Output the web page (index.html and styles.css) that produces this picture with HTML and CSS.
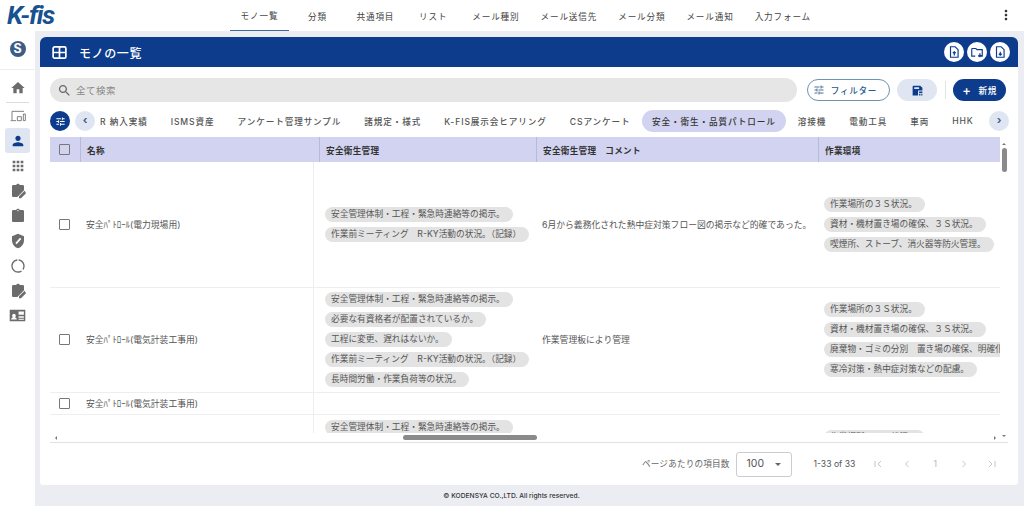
FILE: index.html
```html
<!DOCTYPE html>
<html lang="ja">
<head>
    <meta charset="UTF-8">
    <meta name="viewport" content="width=device-width, initial-scale=1.0">
    <title>モノの一覧</title>
    <link rel="stylesheet" href="styles.css">
</head>
<body>
    <header class="topbar">
        <div class="logo">K-fis</div>
        <nav class="nav">
            <a class="nav-item active">モノ一覧</a>
            <a class="nav-item">分類</a>
            <a class="nav-item">共通項目</a>
            <a class="nav-item">リスト</a>
            <a class="nav-item">メール種別</a>
            <a class="nav-item">メール送信先</a>
            <a class="nav-item">メール分類</a>
            <a class="nav-item">メール通知</a>
            <a class="nav-item">入力フォーム</a>
        </nav>
        <svg class="more" viewBox="0 0 24 24"><path d="M12 8c1.1 0 2-.9 2-2s-.9-2-2-2-2 .9-2 2 .9 2 2 2zm0 2c-1.1 0-2 .9-2 2s.9 2 2 2 2-.9 2-2-.9-2-2-2zm0 6c-1.1 0-2 .9-2 2s.9 2 2 2 2-.9 2-2-.9-2-2-2z"/></svg>
    </header>

    <div class="app">
        <aside class="sidebar">
            <div class="side-top"><span class="s-badge">S</span></div>
            <div class="side-home">
                <svg class="side-icon" viewBox="0 0 24 24"><path d="M10 20v-6h4v6h5v-8h3L12 3 2 12h3v8z"/></svg>
            </div>
            <div class="side-item">
                <svg class="side-icon line" viewBox="0 0 24 24"><path d="M21 5H3v13M1 19h8M11 19v-6h6v6zM20 9h3v10h-3z"/></svg>
            </div>
            <div class="side-item active">
                <svg class="side-icon" viewBox="0 0 24 24"><path d="M12 12c2.210 0 4-1.790 4-4s-1.790-4-4-4-4 1.790-4 4 1.790 4 4 4zm0 2c-2.670 0-8 1.340-8 4v2h16v-2c0-2.660-5.330-4-8-4z"/></svg>
            </div>
            <div class="side-item">
                <svg class="side-icon" viewBox="0 0 24 24"><path d="M4 8h4V4H4v4zm6 12h4v-4h-4v4zm-6 0h4v-4H4v4zm0-6h4v-4H4v4zm6 0h4v-4h-4v4zm6-10v4h4V4h-4zm-6 4h4V4h-4v4zm6 6h4v-4h-4v4zm0 6h4v-4h-4v4z"/></svg>
            </div>
            <div class="side-item">
                <svg class="side-icon" viewBox="0 0 24 24"><path d="M19 3h-4.180C14.400 1.840 13.300 1 12 1s-2.400.84-2.820 2H5c-1.100 0-2 .9-2 2v14c0 1.100.9 2 2 2h6l10-10V5c0-1.100-.9-2-2-2zM22 11.500 13.500 20v3H16.500L24 15.500z"/></svg>
            </div>
            <div class="side-item">
                <svg class="side-icon" viewBox="0 0 24 24"><path d="M19 3h-4.180C14.400 1.840 13.300 1 12 1c-1.300 0-2.400.84-2.820 2H5c-1.100 0-2 .9-2 2v14c0 1.100.9 2 2 2h14c1.100 0 2-.9 2-2V5c0-1.100-.9-2-2-2zm-7 0c.55 0 1 .45 1 1s-.45 1-1 1-1-.45-1-1 .45-1 1-1z"/></svg>
            </div>
            <div class="side-item">
                <svg class="side-icon" viewBox="0 0 24 24"><path fill-rule="evenodd" d="M12 1 3 5v6c0 5.550 3.840 10.740 9 12 5.160-1.260 9-6.450 9-12V5zM8 15l7-8 2 2-7 8z"/></svg>
            </div>
            <div class="side-item">
                <svg class="side-icon" viewBox="0 0 24 24"><path d="M13 2.050v2.020c3.950.49 7 3.850 7 7.930 0 1.650-.5 3.180-1.360 4.460l1.440 1.440C21.290 16.280 22 14.220 22 12c0-5.180-3.950-9.450-9-9.950zM11 2.050C5.950 2.550 2 6.820 2 12c0 5.520 4.480 10 10 10 2.220 0 4.280-.71 5.900-1.930l-1.440-1.440C15.180 19.500 13.650 20 12 20c-4.410 0-8-3.590-8-8 0-4.080 3.050-7.440 7-7.930z"/></svg>
            </div>
            <div class="side-item">
                <svg class="side-icon" viewBox="0 0 24 24"><path d="M19 3h-4.180C14.400 1.840 13.300 1 12 1s-2.400.84-2.820 2H5c-1.100 0-2 .9-2 2v14c0 1.100.9 2 2 2h6l10-10V5c0-1.100-.9-2-2-2zM22 11.500 13.500 20v3H16.500L24 15.500z"/></svg>
            </div>
            <div class="side-item">
                <svg class="side-icon wide" viewBox="0 0 24 24"><path fill-rule="evenodd" d="M1 4h22v16H1zM13.500 6.500v4.500h7.500V6.500zM3 17.500h8c0-2-1.700-3-2.500-3.200a2.600 2.600 0 1 0-3 0C4.700 14.500 3 15.500 3 17.500zM13.500 13v2h7.500v-2zM13.500 16.500v1.500h7.500v-1.500z"/></svg>
            </div>
        </aside>

        <main class="main">
            <section class="card">
                <div class="card-header">
                    <svg class="title-icon" viewBox="0 0 24 24"><rect x="3" y="4" width="18" height="16" rx="2"/><path d="M3 12h18M12 4v16"/></svg>
                    <h1>モノの一覧</h1>
                    <div class="header-actions">
                        <span class="round-btn"><svg viewBox="0 0 24 24"><path d="M6 3h8l5 5v13H6zM12.500 18v-6M10 14l2.500-2.500L15 14"/></svg></span>
                        <span class="round-btn"><svg viewBox="0 0 24 24"><path d="M3 6h7l2 2h9v11h-7M3 6v13h6M17 14v6M14.500 17.500 17 20l2.500-2.500"/></svg></span>
                        <span class="round-btn"><svg viewBox="0 0 24 24"><path d="M6 3h8l5 5v13H6zM12.500 11.500v6M10 15l2.500 2.500L15 15"/></svg></span>
                    </div>
                </div>

                <div class="card-body">
                    <div class="search-row">
                        <div class="search">
                            <svg viewBox="0 0 24 24"><path d="M15.500 14h-.79l-.28-.27C15.410 12.590 16 11.110 16 9.500 16 5.910 13.090 3 9.500 3S3 5.910 3 9.500 5.910 16 9.500 16c1.610 0 3.090-.59 4.230-1.570l.27.28v.79l5 4.990L20.490 19l-4.990-5zm-6 0C7.010 14 5 11.990 5 9.500S7.010 5 9.500 5 14 7.010 14 9.500 11.990 14 9.500 14z"/></svg>
                            <span>全て検索</span>
                        </div>
                        <button class="filter-btn">
                            <svg viewBox="0 0 24 24"><path d="M3 17v2h6v-2H3zM3 5v2h10V5H3zm10 16v-2h8v-2h-8v-2h-2v6h2zM7 9v2H3v2h4v2h2V9H7zm14 4v-2H11v2h10zm-6-4h2V7h4V5h-4V3h-2v6z"/></svg>
                            フィルター
                        </button>
                        <button class="save-btn">
                            <svg viewBox="0 0 24 24"><path fill-rule="evenodd" d="M17 3H5c-1.100 0-2 .9-2 2v16h10v-9h8V7zM15 9H6V6h9zM15 14h6v2.500h-6zM15 18h2.500v3H15zM19 18h2v3h-2z"/></svg>
                        </button>
                        <span class="row-divider"></span>
                        <button class="new-btn"><span class="plus">+</span>新規</button>
                    </div>

                    <div class="tab-row">
                        <span class="tune-btn">
                            <svg viewBox="0 0 24 24"><path d="M3 17v2h6v-2H3zM3 5v2h10V5H3zm10 16v-2h8v-2h-8v-2h-2v6h2zM7 9v2H3v2h4v2h2V9H7zm14 4v-2H11v2h10zm-6-4h2V7h4V5h-4V3h-2v6z"/></svg>
                        </span>
                        <span class="page-btn">‹</span>
                        <div class="tabs">
                            <a class="tab">R 納入実績</a>
                            <a class="tab">ISMS資産</a>
                            <a class="tab">アンケート管理サンプル</a>
                            <a class="tab">諸規定・様式</a>
                            <a class="tab">K-FIS展示会ヒアリング</a>
                            <a class="tab">CSアンケート</a>
                            <a class="tab active">安全・衛生・品質パトロール</a>
                            <a class="tab">溶接機</a>
                            <a class="tab">電動工具</a>
                            <a class="tab">車両</a>
                            <a class="tab">HHK</a>
                        </div>
                        <span class="page-btn">›</span>
                    </div>

                    <div class="table-wrap">
                        <div class="table-area">
                            <div class="thead">
                                <div class="th th-check"><span class="checkbox"></span></div>
                                <div class="th th-name">名称</div>
                                <div class="th th-safety">安全衛生管理</div>
                                <div class="th th-comment">安全衛生管理　コメント</div>
                                <div class="th th-env">作業環境</div>
                            </div>
                            <div class="tbody">
                                <div class="tr tall">
                                    <div class="td td-check"><span class="checkbox"></span></div>
                                    <div class="td td-name">安全ﾊﾟﾄﾛｰﾙ(電力現場用)</div>
                                    <div class="td td-safety">
                                        <span class="chip">安全管理体制・工程・緊急時連絡等の掲示。</span>
                                        <span class="chip">作業前ミーティング　R-KY活動の状況。（記録）</span>
                                    </div>
                                    <div class="td td-comment">6月から義務化された熱中症対策フロー図の掲示など的確であった。</div>
                                    <div class="td td-env">
                                        <span class="chip">作業場所の３Ｓ状況。</span>
                                        <span class="chip">資材・機材置き場の確保、３Ｓ状況。</span>
                                        <span class="chip">喫煙所、ストーブ、消火器等防火管理。</span>
                                    </div>
                                </div>
                                <div class="tr">
                                    <div class="td td-check"><span class="checkbox"></span></div>
                                    <div class="td td-name">安全ﾊﾟﾄﾛｰﾙ(電気計装工事用)</div>
                                    <div class="td td-safety">
                                        <span class="chip">安全管理体制・工程・緊急時連絡等の掲示。</span>
                                        <span class="chip">必要な有資格者が配置されているか。</span>
                                        <span class="chip">工程に変更、遅れはないか。</span>
                                        <span class="chip">作業前ミーティング　R-KY活動の状況。（記録）</span>
                                        <span class="chip">長時間労働・作業負荷等の状況。</span>
                                    </div>
                                    <div class="td td-comment">作業管理板により管理</div>
                                    <div class="td td-env">
                                        <span class="chip">作業場所の３Ｓ状況。</span>
                                        <span class="chip">資材・機材置き場の確保、３Ｓ状況。</span>
                                        <span class="chip">廃棄物・ゴミの分別　置き場の確保、明確化されているか。</span>
                                        <span class="chip">寒冷対策・熱中症対策などの配慮。</span>
                                    </div>
                                </div>
                                <div class="tr short">
                                    <div class="td td-check"><span class="checkbox"></span></div>
                                    <div class="td td-name">安全ﾊﾟﾄﾛｰﾙ(電気計装工事用)</div>
                                    <div class="td td-safety"></div>
                                    <div class="td td-comment"></div>
                                    <div class="td td-env"></div>
                                </div>
                                <div class="tr">
                                    <div class="td td-check"><span class="checkbox"></span></div>
                                    <div class="td td-name">安全ﾊﾟﾄﾛｰﾙ(電気計装工事用)</div>
                                    <div class="td td-safety">
                                        <span class="chip">安全管理体制・工程・緊急時連絡等の掲示。</span>
                                        <span class="chip">必要な有資格者が配置されているか。</span>
                                        <span class="chip">工程に変更、遅れはないか。</span>
                                        <span class="chip">作業前ミーティング　R-KY活動の状況。（記録）</span>
                                        <span class="chip">長時間労働・作業負荷等の状況。</span>
                                    </div>
                                    <div class="td td-comment"></div>
                                    <div class="td td-env">
                                        <span class="chip">作業場所の３Ｓ状況。</span>
                                        <span class="chip">資材・機材置き場の確保、３Ｓ状況。</span>
                                        <span class="chip">喫煙所、ストーブ、消火器等防火管理。</span>
                                        <span class="chip">寒冷対策・熱中症対策などの配慮。</span>
                                    </div>
                                </div>
                            </div>
                            <div class="hscroll">
                                <span class="arrow arrow-left"></span>
                                <span class="hthumb"></span>
                                <span class="arrow arrow-right"></span>
                            </div>
                        </div>
                        <div class="vscroll">
                            <span class="arrow arrow-up"></span>
                            <span class="vthumb"></span>
                            <span class="arrow arrow-down"></span>
                        </div>
                    </div>

                    <div class="paginator">
                        <span class="per-page">ページあたりの項目数</span>
                        <div class="page-size">100<span class="caret"></span></div>
                        <span class="range">1-33 of 33</span>
                        <div class="pager">
                            <svg viewBox="0 0 24 24"><path d="M6 6v12M18 6l-6 6 6 6"/></svg>
                            <svg viewBox="0 0 24 24"><path d="M15 6l-6 6 6 6"/></svg>
                            <span>1</span>
                            <svg viewBox="0 0 24 24"><path d="M9 6l6 6-6 6"/></svg>
                            <svg viewBox="0 0 24 24"><path d="M6 6l6 6-6 6M18 6v12"/></svg>
                        </div>
                    </div>
                </div>
            </section>
            <footer class="footer">© KODENSYA CO.,LTD. All rights reserved.</footer>
        </main>
    </div>
</body>
</html>
```

FILE: styles.css
```css
* {
    box-sizing: border-box;
}
body {
    margin: 0;
    width: 1024px;
    height: 506px;
    overflow: hidden;
    display: flex;
    flex-direction: column;
    background: #ecedf2;
    color: #555;
    font-family: Inter, "Noto Sans CJK JP", sans-serif;
}
button {
    font-family: inherit;
    border: none;
    cursor: pointer;
}

/* top bar */
.topbar {
    height: 31px;
    flex: none;
    display: flex;
    align-items: stretch;
    background: white;
}
.logo {
    width: 230px;
    padding: 0 0 0 7px;
    font-family: Roboto, sans-serif;
    font-size: 26px;
    font-weight: 700;
    font-style: italic;
    line-height: 31px;
    letter-spacing: -1.2px;
    color: #17518f;
}
.nav {
    flex: 1;
    display: flex;
}
.nav-item {
    min-width: 57px;
    padding: 0 10.5px;
    display: flex;
    align-items: center;
    justify-content: center;
    font-size: 8.6px;
    letter-spacing: 0.85px;
    color: #444;
    white-space: nowrap;
}
.nav-item.active {
    min-width: 59px;
    border-bottom: 1px solid #3f6797;
}
.more {
    width: 16px;
    height: 16px;
    margin: 7px 10px 0 0;
    fill: #333;
}

/* sidebar */
.app {
    flex: 1;
    display: flex;
    min-height: 0;
}
.sidebar {
    width: 35px;
    flex: none;
    background: white;
}
.side-top {
    height: 39px;
    padding-bottom: 2px;
    display: flex;
    align-items: center;
    justify-content: center;
    border-bottom: 1px solid #ededed;
}
.s-badge {
    width: 16px;
    height: 16px;
    border-radius: 50%;
    background: #3e5c86;
    color: white;
    font-size: 12.5px;
    font-weight: 700;
    line-height: 16px;
    text-align: center;
}
.side-home {
    height: 33px;
    margin: 0 6px;
    padding-top: 3px;
    display: flex;
    align-items: center;
    justify-content: center;
    border-bottom: 1px solid #ddd;
}
.side-item {
    height: 25px;
    margin: 0 5px;
    display: flex;
    align-items: center;
    justify-content: center;
    border-radius: 3px;
}
.side-item.active {
    background: #dfe6f2;
}
.side-item.active .side-icon {
    fill: #0d3c8c;
}
.side-icon {
    width: 16px;
    height: 16px;
    fill: #6c6c6c;
}
.side-icon.line {
    fill: none;
    stroke: #777;
    stroke-width: 1.4;
}
.side-icon.wide {
    width: 17px;
    height: 17px;
}

/* main card */
.main {
    flex: 1;
    min-width: 0;
    display: flex;
    flex-direction: column;
    padding: 6px 6px 0 5px;
}
.card {
    height: 448px;
    flex: none;
    display: flex;
    flex-direction: column;
    background: white;
    border-radius: 6px 6px 3px 3px;
    overflow: hidden;
}
.card-header {
    height: 30px;
    flex: none;
    display: flex;
    align-items: center;
    padding: 0 8px 0 11px;
    background: #0d3c8c;
    color: white;
}
.card-header h1 {
    margin: 0 0 0 11px;
    font-size: 12px;
    font-weight: 500;
    letter-spacing: 0.6px;
}
.title-icon {
    width: 17px;
    height: 17px;
    fill: none;
    stroke: white;
    stroke-width: 2.4;
}
.header-actions {
    margin-left: auto;
    display: flex;
    gap: 3px;
}
.round-btn {
    width: 20px;
    height: 20px;
    border-radius: 50%;
    background: white;
    display: flex;
    align-items: center;
    justify-content: center;
}
.round-btn svg {
    width: 14px;
    height: 14px;
    fill: none;
    stroke: #0d3c8c;
    stroke-width: 2;
}
.card-body {
    flex: 1;
    min-height: 0;
    display: flex;
    flex-direction: column;
    padding: 11px 10px 0;
}

/* search row */
.search-row {
    height: 24px;
    flex: none;
    display: flex;
    align-items: center;
}
.search {
    width: 747px;
    height: 24px;
    display: flex;
    align-items: center;
    padding-left: 7px;
    border-radius: 12px;
    background: #e6e6e6;
    font-size: 9.5px;
    letter-spacing: 0.5px;
    color: #888;
}
.search svg {
    width: 15px;
    height: 15px;
    margin-right: 4px;
    fill: #666;
}
.filter-btn {
    width: 83px;
    height: 22px;
    margin-left: 10px;
    padding: 0 7px 0 0;
    display: flex;
    align-items: center;
    justify-content: center;
    gap: 6px;
    border: 1px solid #6f93b3;
    border-radius: 11px;
    background: white;
    color: #1f5b8f;
    font-size: 8.6px;
    font-weight: 500;
    letter-spacing: 0.7px;
}
.filter-btn svg {
    width: 12px;
    height: 12px;
    fill: #4a7299;
}
.save-btn {
    width: 40px;
    height: 22px;
    margin-left: 7px;
    display: flex;
    align-items: center;
    justify-content: center;
    border-radius: 11px;
    background: #dfe6f2;
}
.save-btn svg {
    width: 13px;
    height: 13px;
    fill: #0d3c8c;
}
.row-divider {
    width: 1px;
    height: 18px;
    margin: 0 7px 0 8px;
    background: #e3e3e3;
}
.new-btn {
    width: 53px;
    height: 22px;
    display: flex;
    align-items: center;
    justify-content: center;
    gap: 7px;
    border-radius: 11px;
    background: #0d3c8c;
    color: white;
    font-size: 8.6px;
    font-weight: 500;
    letter-spacing: 0.6px;
}
.plus {
    font-size: 13px;
    line-height: 13px;
}

/* tabs */
.tab-row {
    height: 22px;
    margin-top: 8px;
    flex: none;
    display: flex;
    align-items: center;
}
.tune-btn {
    width: 20px;
    height: 20px;
    flex: none;
    border-radius: 50%;
    background: #0d3c8c;
    display: flex;
    align-items: center;
    justify-content: center;
}
.tune-btn svg {
    width: 11px;
    height: 11px;
    fill: white;
}
.page-btn {
    width: 20px;
    height: 20px;
    flex: none;
    margin-left: 5px;
    border-radius: 50%;
    background: #dfe6f2;
    color: #3d5f8f;
    font-size: 11px;
    font-weight: 700;
    line-height: 18px;
    text-align: center;
}
.tabs {
    width: 894px;
    flex: none;
    display: flex;
    padding-left: 0;
}
.tab-row .page-btn:last-child {
    margin-left: 0;
}
.tab {
    height: 22px;
    padding: 0 11.5px;
    display: flex;
    align-items: center;
    border-radius: 11px;
    font-size: 8.6px;
    font-weight: 500;
    letter-spacing: 0.9px;
    color: #555;
    white-space: nowrap;
}
.tab:first-child {
    margin-left: -6.5px;
}
.tab.active {
    padding: 0 10.5px;
    margin-left: -0.5px;
    background: #d2d3f0;
    color: #333;
}

/* table */
.table-wrap {
    height: 306px;
    margin-top: 5px;
    flex: none;
    display: flex;
    border-bottom: 1px solid #e2e2e2;
}
.table-area {
    width: 950px;
    flex: none;
    display: flex;
    flex-direction: column;
}
.thead {
    height: 25px;
    flex: none;
    display: flex;
    background: #d2d3f0;
    overflow: hidden;
}
.th {
    display: flex;
    align-items: center;
    flex: none;
    padding-left: 6px;
    border-right: 1px solid #b9bbd6;
    font-size: 8.6px;
    font-weight: 700;
    letter-spacing: 0.3px;
    color: #333;
}
.th-check {
    width: 31px;
    padding-left: 9px;
}
.th-name {
    width: 239px;
}
.th-safety {
    width: 217px;
}
.th-comment {
    width: 282px;
}
.th-env {
    width: 181px;
    border-right: none;
}
.tbody {
    flex: 1;
    min-height: 0;
    overflow: hidden;
}
.tr {
    display: flex;
    align-items: stretch;
    width: 950px;
    height: 105px;
    border-bottom: 1px solid #eeeeee;
    overflow: hidden;
}
.tr.tall {
    height: 125.5px;
}
.tr.short {
    height: 22.5px;
}
.td {
    flex: none;
    display: flex;
    flex-direction: column;
    justify-content: center;
    align-items: flex-start;
    font-size: 8.8px;
    color: #555;
}
.td-check {
    width: 31px;
    padding-left: 9px;
}
.td-name {
    width: 233px;
    padding-left: 5px;
    border-right: 1px solid #eeeeee;
}
.td-safety {
    width: 223px;
    padding-left: 11px;
    gap: 5px;
}
.td-comment {
    width: 282px;
    padding-left: 5px;
}
.td-env {
    width: 181px;
    padding-left: 5px;
    gap: 5px;
}
.chip {
    height: 15px;
    padding: 0 8px 0 6px;
    border-radius: 8px;
    background: #e3e3e3;
    font-size: 8.7px;
    line-height: 15px;
    white-space: nowrap;
}
.checkbox {
    display: block;
    width: 10.5px;
    height: 10.5px;
    border: 1px solid #777;
    border-radius: 1px;
}

/* scrollbars */
.hscroll {
    height: 9px;
    flex: none;
    display: flex;
    align-items: center;
    padding: 0 4px 0 5px;
}
.hthumb {
    width: 134px;
    height: 5px;
    margin-left: 346px;
    margin-right: auto;
    border-radius: 3px;
    background: #8a8a8a;
}
.vscroll {
    flex: 1;
    display: flex;
    flex-direction: column;
    align-items: center;
    padding: 6px 0 5px;
}
.vthumb {
    width: 5px;
    height: 24px;
    margin-top: 3px;
    margin-bottom: auto;
    border-radius: 3px;
    background: #8a8a8a;
}
.arrow {
    width: 0;
    height: 0;
    flex: none;
    border: 2.5px solid transparent;
}
.arrow-left {
    border-right-color: #777;
    border-left-width: 0;
}
.arrow-right {
    border-left-color: #777;
    border-right-width: 0;
}
.arrow-up {
    border-bottom-color: #777;
    border-top-width: 0;
}
.arrow-down {
    border-top-color: #777;
    border-bottom-width: 0;
}

/* paginator */
.paginator {
    flex: 1;
    display: flex;
    align-items: center;
    padding: 0 0 0 592px;
    font-size: 8.6px;
    line-height: 12px;
    color: #666;
}
.per-page {
    margin-right: 6px;
    letter-spacing: 0.02em;
    white-space: nowrap;
}
.page-size {
    width: 56px;
    height: 25px;
    padding-left: 10px;
    display: flex;
    align-items: center;
    border: 1px solid #ccc;
    border-radius: 3px;
    font-size: 10.5px;
    color: #555;
}
.caret {
    margin-left: 11px;
    width: 0;
    height: 0;
    border: 3px solid transparent;
    border-top-color: #666;
    border-bottom-width: 0;
}
.range {
    margin-left: 22px;
    white-space: nowrap;
    color: #555;
}
.pager {
    margin-left: 17px;
    display: flex;
    align-items: center;
    gap: 16.5px;
    color: #bbb;
    font-size: 9.5px;
}
.pager span {
    width: 12px;
    text-align: center;
}
.pager svg {
    width: 12px;
    height: 12px;
    fill: none;
    stroke: #bbb;
    stroke-width: 1.7;
}

/* footer */
.footer {
    flex: 1;
    display: flex;
    align-items: center;
    justify-content: center;
    padding-right: 35px;
    font-size: 6.7px;
    font-weight: 500;
    color: #333;
}
```
